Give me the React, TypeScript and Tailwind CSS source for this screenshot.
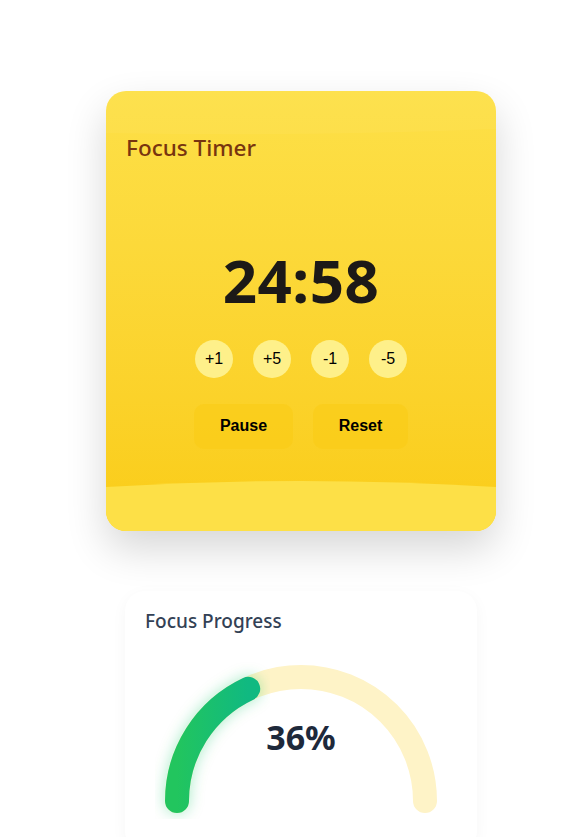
import { useState } from "react";

const adjustSteps = [1, 5, -1, -5];

function formatTime(total: number) {
  const m = Math.floor(total / 60);
  const s = total % 60;
  return `${String(m).padStart(2, "0")}:${String(s).padStart(2, "0")}`;
}

function FocusTimerCard() {
  const [seconds, setSeconds] = useState(24 * 60 + 58);
  const [running, setRunning] = useState(true);

  return (
    <div className="relative flex h-[440px] w-[390px] flex-col overflow-hidden rounded-[20px] bg-linear-to-b from-[#fde047] to-[#facc15] shadow-[0_18px_40px_rgba(0,0,0,0.16)]">
      <svg className="absolute left-0 top-0 h-[46px] w-full" viewBox="0 0 390 46" preserveAspectRatio="none">
        <path d="M0 0 H390 V38 Q195 46 0 42 Z" fill="#ffffff" opacity="0.04" />
      </svg>
      <h2 className="relative z-10 pl-5 pt-[42px] font-['Noto_Sans',sans-serif] text-[22.5px] font-medium leading-[30px] text-[#78350f]">
        Focus Timer
      </h2>
      <div className="relative z-10 mt-[87px] text-center font-['Noto_Sans',sans-serif] text-[60px] font-bold leading-none tracking-[0.5px] text-[#1c1917]">
        {formatTime(seconds)}
      </div>
      <div className="relative z-10 mt-[30px] flex justify-center gap-5">
        {adjustSteps.map((step) => (
          <button
            key={step}
            type="button"
            onClick={() => setSeconds((current) => Math.max(0, current + step * 60))}
            className="flex h-[38px] w-[38px] items-center justify-center rounded-full bg-[#fef08a] font-['Liberation_Sans',Arial,sans-serif] text-[16px] text-black"
          >
            {step > 0 ? `+${step}` : step}
          </button>
        ))}
      </div>
      <div className="relative z-10 mt-[26px] flex justify-center gap-5">
        <button
          type="button"
          onClick={() => setRunning((value) => !value)}
          className="h-[45px] w-[99px] rounded-[10px] bg-[#facc15]/60 pb-[2px] font-['Liberation_Sans',Arial,sans-serif] text-[16px] font-bold text-black"
        >
          {running ? "Pause" : "Start"}
        </button>
        <button
          type="button"
          onClick={() => setSeconds(25 * 60)}
          className="h-[45px] w-[95px] rounded-[10px] bg-[#facc15]/60 pb-[2px] font-['Liberation_Sans',Arial,sans-serif] text-[16px] font-bold text-black"
        >
          Reset
        </button>
      </div>
      <svg className="absolute bottom-0 left-0 h-[50px] w-full" viewBox="0 0 390 50" preserveAspectRatio="none">
        <path d="M0 6 Q195 -6 390 6 V50 H0 Z" fill="#fde047" />
      </svg>
    </div>
  );
}

function FocusProgressCard({ percent }: { percent: number }) {
  const cx = 156;
  const cy = 156;
  const r = 124;
  const angle = (percent / 100) * Math.PI;
  const ex = cx - r * Math.cos(angle);
  const ey = cy - r * Math.sin(angle);

  return (
    <div className="h-[260px] w-[352px] rounded-[20px] bg-white px-5 pt-[17px] shadow-[0_4px_16px_rgba(0,0,0,0.04)]">
      <h3 className="font-['Noto_Sans',sans-serif] text-[19px] font-medium leading-[27px] text-[#334155]">Focus Progress</h3>
      <div className="relative mt-[10px] h-[174px] w-[312px]">
        <svg width="312" height="174" viewBox="0 0 312 174">
          <defs>
            <linearGradient id="progressGradient" x1="0" y1="0" x2="1" y2="0">
              <stop offset="0%" stopColor="#22c55e" />
              <stop offset="100%" stopColor="#10b981" />
            </linearGradient>
            <filter id="glow" x="-30%" y="-30%" width="160%" height="160%">
              <feGaussianBlur stdDeviation="7" />
            </filter>
          </defs>
          <path
            d={`M ${cx - r} ${cy} A ${r} ${r} 0 0 1 ${cx + r} ${cy}`}
            fill="none"
            stroke="#fef3c7"
            strokeWidth="24"
            strokeLinecap="round"
          />
          <path
            d={`M ${cx - r} ${cy} A ${r} ${r} 0 0 1 ${ex} ${ey}`}
            fill="none"
            stroke="#22c55e"
            strokeOpacity="0.3"
            strokeWidth="26"
            strokeLinecap="round"
            filter="url(#glow)"
          />
          <path
            d={`M ${cx - r} ${cy} A ${r} ${r} 0 0 1 ${ex} ${ey}`}
            fill="none"
            stroke="url(#progressGradient)"
            strokeWidth="24"
            strokeLinecap="round"
          />
        </svg>
        <div className="absolute left-0 top-[71px] w-full text-center font-['Noto_Sans',sans-serif] text-[34px] font-bold leading-[42px] text-[#1e293b]">
          {percent}%
        </div>
      </div>
    </div>
  );
}

export default function App() {
  return (
    <div className="flex min-h-[837px] w-full flex-col items-center gap-[60px] bg-white pl-[37px] pt-[91px]">
      <FocusTimerCard />
      <FocusProgressCard percent={36} />
    </div>
  );
}
